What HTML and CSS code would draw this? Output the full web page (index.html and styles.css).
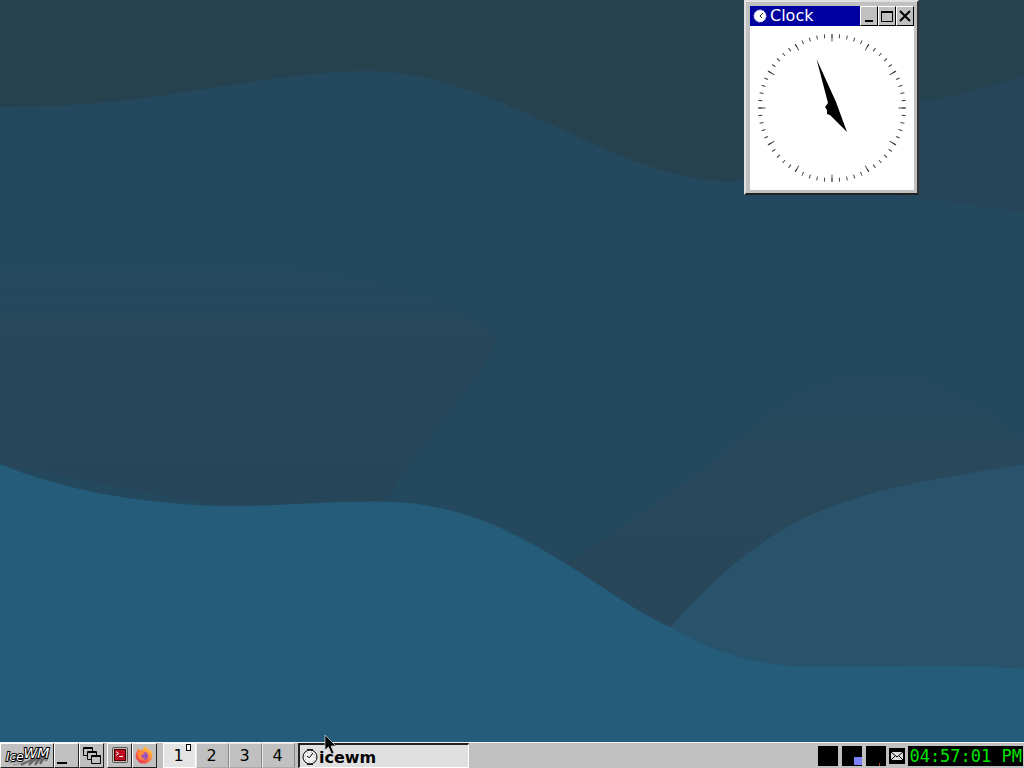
FILE: index.html
```
<!DOCTYPE html>
<html lang="en">
<head>
<meta charset="utf-8">
<title>IceWM desktop</title>
<link rel="stylesheet" href="styles.css">
</head>
<body>

<main class="desktop">

  <svg class="wallpaper" viewBox="0 0 1024 768" preserveAspectRatio="none" aria-hidden="true">
    <defs>
      <linearGradient id="shadeLeft" x1="0" y1="0" x2="0" y2="1">
        <stop offset="0" stop-color="#29475a" stop-opacity="0"/>
        <stop offset="0.35" stop-color="#29475a"/>
        <stop offset="1" stop-color="#274558"/>
      </linearGradient>
      <linearGradient id="shadeRight" x1="0" y1="0" x2="0" y2="1">
        <stop offset="0" stop-color="#2a485b" stop-opacity="0.3"/>
        <stop offset="0.4" stop-color="#2a485b"/>
        <stop offset="1" stop-color="#294659"/>
      </linearGradient>
    </defs>
    <rect width="1024" height="768" fill="#24495f"/>
    <!-- sky -->
    <path fill="#27424f" d="M0 0H1024V76C990 86 960 97 920 101C860 108 790 130 735 182C700 182 650 170 600 147C520 110 440 70 365 71C290 72 200 92 120 101C80 105 40 107 0 107Z"/>
    <path fill="#264558" d="M1024 76C990 86 960 97 920 101C850 110 780 135 735 182C800 189 900 192 1024 213Z"/>
    <!-- shaded slopes -->
    <path fill="url(#shadeLeft)" d="M0 262C150 255 300 260 400 290C450 305 500 325 495 345C480 380 430 430 385 502L220 506L0 464Z"/>
    <path fill="url(#shadeRight)" d="M565 565C640 515 710 470 750 430C800 385 860 365 920 380C960 390 990 415 1024 440V470L800 560L672 628Z"/>
    <!-- front hills -->
    <path fill="#28536b" d="M670 628C700 592 750 545 800 520C870 486 950 477 1024 464V680H780Z"/>
    <path fill="#245c79" d="M0 464C60 489 140 505 230 506C290 506 340 500 390 502C460 504 510 530 560 560C600 584 635 612 672 628C710 649 750 666 810 667C890 667 960 663 1024 669V768H0Z"/>
  </svg>

  <section class="window" aria-label="Clock">
    <header class="titlebar">
      <div class="caption">
        <svg class="caption-icon" width="16" height="16" viewBox="0 0 16 16" aria-hidden="true">
          <circle cx="8" cy="8" r="6" fill="#fff"/>
          <circle cx="8" cy="8" r="6" fill="none" stroke="#ddd" stroke-dasharray="2 1"/>
          <path d="M11 5L8 8L10 10" fill="none" stroke="#222"/>
        </svg>
        <span>Clock</span>
      </div>
      <button class="winbtn" aria-label="Minimize">
        <svg width="16" height="16" viewBox="0 0 16 16"><path d="M4 13H12" stroke="#000" stroke-width="2"/></svg>
      </button>
      <button class="winbtn" aria-label="Maximize">
        <svg width="16" height="16" viewBox="0 0 16 16"><path d="M2.500 3V13.500H13.500V3" fill="none" stroke="#000"/><path d="M2 4H14" stroke="#000" stroke-width="2"/></svg>
      </button>
      <button class="winbtn" aria-label="Close">
        <svg width="16" height="16" viewBox="0 0 16 16"><path d="M3 3L13 13M13 3L3 13" stroke="#000" stroke-width="2"/></svg>
      </button>
    </header>
    <svg class="dial" viewBox="0 0 164 164" role="img" aria-label="Three minutes to five">
      <g transform="rotate(-90 82 82)" fill="none" stroke="#444">
        <circle cx="82" cy="82" r="72" stroke-width="4" pathLength="360" stroke-dasharray="0.800 5.200" stroke-dashoffset="0.400"/>
        <circle cx="82" cy="82" r="70" stroke-width="7" pathLength="360" stroke-dasharray="0.800 29.200" stroke-dashoffset="0.400"/>
      </g>
      <path d="M66.500 33L86 76L97 106L80 89L77 88L77 84L75 81L78 77Z"/>
    </svg>
  </section>

</main>

<footer class="taskbar">

  <button class="tool start" aria-label="IceWM menu">
    <svg width="48" height="22" viewBox="0 0 48 22">
      <path d="M6 18L22 15M10 20L26 16" stroke="#888" fill="none"/>
      <path d="M18 20L30 14L26 20L36 11L32 20L41 9L37 19L46 7L43 16" fill="none" stroke="#666" stroke-width="2"/>
      <text class="logo-text" x="3" y="16" font-size="12">Ice<tspan dy="-3" font-size="14">WM</tspan></text>
    </svg>
  </button>
  <button class="tool" aria-label="Show desktop">
    <svg width="20" height="20" viewBox="0 0 20 20"><path d="M0 17H10" stroke="#000" stroke-width="2"/></svg>
  </button>
  <button class="tool" aria-label="Window list">
    <svg width="20" height="20" viewBox="0 0 20 20" fill="#c0c0c0" stroke="#000">
      <path d="M1.500 1.500H10.500V9.500H1.500ZM1 2.500H11"/>
      <path d="M5.500 5.500H14.500V13.500H5.500ZM5 6.500H15"/>
      <path d="M9.500 9.500H18.500V17.500H9.500ZM9 10.500H19"/>
    </svg>
  </button>

  <div class="launchers">
    <button class="tool" aria-label="Terminal">
      <svg width="20" height="20" viewBox="0 0 20 20">
        <rect x="2.500" y="1.500" width="15" height="15" rx="1" fill="#c8b8b0" stroke="#555"/>
        <rect x="4" y="3" width="12" height="12" fill="#c00c20"/>
        <path d="M4.500 3V14.500H16M4 3.500H15.500V15" fill="none" stroke="#400"/>
        <path d="M6 5.500L8.500 7.500L6 9.500M9 10.500H13" fill="none" stroke="#fff"/>
      </svg>
    </button>
    <button class="tool" aria-label="Firefox">
      <svg width="20" height="20" viewBox="0 0 20 20">
        <defs>
          <linearGradient id="fox" x1="1" y1="0" x2="0.300" y2="1">
            <stop offset="0" stop-color="#ffe14d"/>
            <stop offset="0.450" stop-color="#ff9640"/>
            <stop offset="1" stop-color="#f0334f"/>
          </linearGradient>
        </defs>
        <g transform="translate(-1 -1)">
          <path fill="url(#fox)" d="M11 1C12 3 15 4 16 6L17 5C19 8 19 12 17 15C14 19 7 20 4 16C1 13 1 9 3 6L4 3L6 5L9 5C9 3 10 2 11 1Z"/>
          <circle cx="10" cy="11" r="4" fill="#9a50c0"/>
          <path fill="#ff8a3c" d="M4 7C7 6 9 7 11 8C10 10 8 9 7 11C8 13 10 14 12 13C10 16 5 15 4 12Z"/>
        </g>
      </svg>
    </button>
  </div>

  <nav class="workspaces" aria-label="Workspaces">
    <button class="workspace active">1<span class="mini"></span></button>
    <button class="workspace">2</button>
    <button class="workspace">3</button>
    <button class="workspace">4</button>
  </nav>

  <button class="task">
    <svg width="18" height="20" viewBox="0 0 18 20" aria-hidden="true">
      <path d="M6 2H12V4H6ZM6 18H12V16H6Z" fill="#222"/>
      <circle cx="9" cy="10" r="7" fill="#f4f4f4" stroke="#000"/>
      <path d="M12 6L8.500 10.500L6 9.500" fill="none" stroke="#000"/>
      <circle cx="9" cy="10" r="5" fill="none" stroke="#888" stroke-dasharray="1 3"/>
    </svg>
    <span>icewm</span>
  </button>

  <div class="tray">
    <span class="monitor"></span>
    <span class="monitor"><i class="load"></i></span>
    <span class="monitor"><i class="blip"></i></span>
    <svg class="mail" width="16" height="16" viewBox="0 0 16 16" role="img" aria-label="Mailbox">
      <rect width="16" height="16"/>
      <rect x="2" y="4" width="12" height="8" fill="#ddd"/>
      <path d="M2 4L8 9L14 4M2 12L6 8M14 12L10 8" fill="none" stroke="#000"/>
    </svg>
    <time class="clock">04:57:01 PM</time>
  </div>

</footer>

<svg class="pointer" width="14" height="22" viewBox="0 0 14 22" aria-hidden="true">
  <path d="M1 1V16L4.500 13L7.500 20L10 19L7 12H12Z" stroke="#ccc" stroke-width="0.800"/>
</svg>

</body>
</html>
```
FILE: styles.css
```
* {
  box-sizing: border-box;
}

body {
  margin: 0;
  height: 100vh;
  display: flex;
  flex-direction: column;
  overflow: hidden;
  background: #245c79;
  font-family: "DejaVu Sans", sans-serif;
  font-size: 16px;
  color: #000;
}

button {
  margin: 0;
  padding: 0;
  border: 0;
  border-radius: 0;
  font: inherit;
  color: inherit;
}

svg {
  display: block;
}

.desktop {
  flex: 1;
}

.wallpaper {
  position: absolute;
  top: 0;
  left: 0;
  width: 100%;
  height: 100%;
}

/* clock window */

.window {
  position: absolute;
  top: 0;
  right: 105px;
  width: 175px;
  padding: 4px 3px 3px 4px;
  background: #c0c0c0;
  border: 2px solid;
  border-color: #e0e0e0 #333 #222 #e0e0e0;
}

.titlebar {
  display: flex;
  height: 20px;
  background: #c0c0c0;
}

.caption {
  flex: 1;
  display: flex;
  align-items: center;
  gap: 2px;
  padding-left: 2px;
  background: #0000a0;
  color: #fff;
  line-height: 22px;
}

.winbtn {
  display: flex;
  align-items: center;
  justify-content: center;
  width: 18px;
  background: #c0c0c0;
  border: 1px solid;
  border-color: #fff #000 #000 #fff;
}

.winbtn svg {
  flex: none;
}

.dial {
  width: 100%;
  background: #fff;
}

/* taskbar */

.taskbar {
  position: relative;
  display: flex;
  height: 26px;
  background: #c0c0c0;
  border-top: 1px solid #f4f4f4;
}

.tool {
  display: flex;
  align-items: center;
  justify-content: center;
  width: 25px;
  background: #c0c0c0;
  border: 1px solid;
  border-color: #fff #222 #222 #fff;
}

.start {
  width: 54px;
}

.logo-text {
  font-family: "DejaVu Sans", sans-serif;
  font-style: italic;
  fill: #fff;
  stroke: #000;
  stroke-width: 2px;
  paint-order: stroke;
}

.launchers {
  display: flex;
  margin-left: 3px;
}

.workspaces {
  display: flex;
  margin-left: 6px;
}

.workspace {
  position: relative;
  width: 33px;
  padding-right: 2px;
  background: #c0c0c0;
  border: 1px solid;
  border-color: #e8e8e8 #888 #aaa #e8e8e8;
}

.workspace.active {
  background: #e4e4e4;
  border-color: #fff;
}

.mini {
  position: absolute;
  top: 0;
  right: 4px;
  width: 5px;
  height: 7px;
  background: #fff;
  border: 1px solid #000;
}

.task {
  display: flex;
  align-items: center;
  flex: 0 1 171px;
  margin-left: 3px;
  padding: 2px 0 0 1px;
  background: #e0e0e0;
  border: 1px solid;
  border-width: 2px 1px 1px 2px;
  border-color: #222 #fff #fff #222;
  font-weight: bold;
}

.tray {
  display: flex;
  align-items: center;
  margin-left: auto;
  padding-right: 1px;
}

.monitor {
  position: relative;
  width: 20px;
  height: 20px;
  margin-right: 4px;
  background: #000;
}

.load {
  position: absolute;
  right: 0;
  bottom: 1px;
  width: 8px;
  height: 8px;
  background: #8080ff;
}

.blip {
  position: absolute;
  right: 6px;
  bottom: 0;
  width: 1px;
  height: 3px;
  background: #a04020;
}

.mail {
  margin: 0 3px 0 -1px;
}

.clock {
  padding: 0 1px;
  background: #000;
  color: #00e400;
  font-family: "DejaVu Sans Mono", monospace;
  font-size: 17px;
  line-height: 20px;
}

.pointer {
  position: absolute;
  left: 324px;
  bottom: 12px;
}
```
